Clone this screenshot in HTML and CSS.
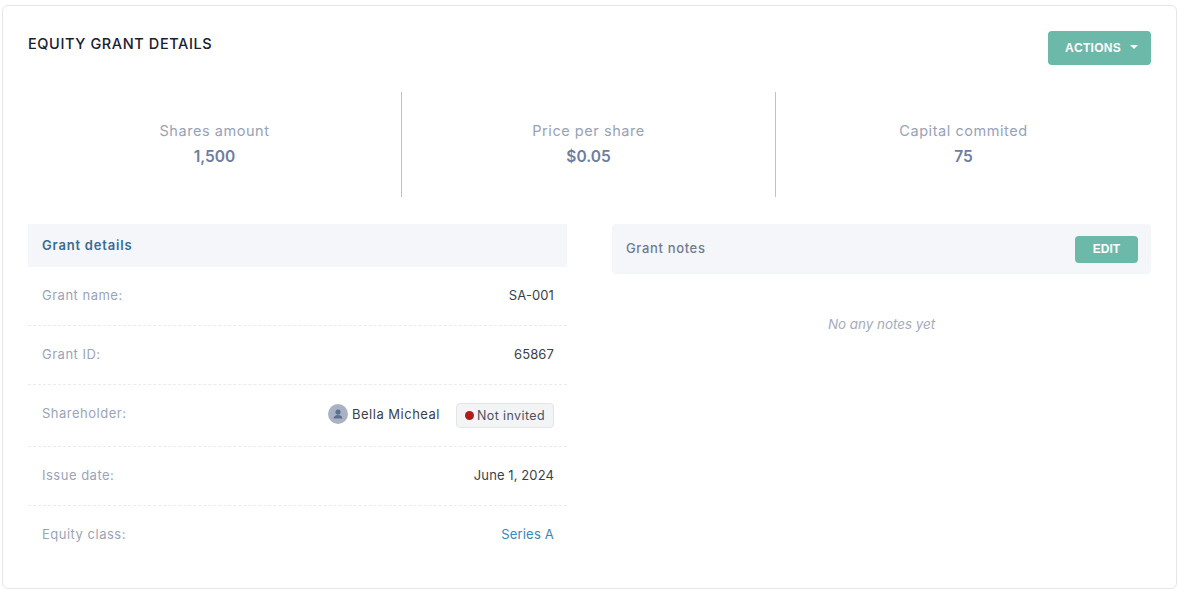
FILE: index.html
```html
<!DOCTYPE html>
<html lang="en">
<head>
<meta charset="utf-8">
<title>Equity grant details</title>
<link rel="stylesheet" href="styles.css">
</head>
<body>
<main class="card">
  <header class="card-head">
    <h1 class="title">EQUITY GRANT DETAILS</h1>
    <button class="btn btn-actions">ACTIONS<span class="caret"></span></button>
  </header>
  <section class="stats">
    <div class="stat"><div class="stat-label">Shares amount</div><div class="stat-value">1,500</div></div>
    <div class="stat"><div class="stat-label">Price per share</div><div class="stat-value">$0.05</div></div>
    <div class="stat"><div class="stat-label">Capital commited</div><div class="stat-value">75</div></div>
  </section>
  <section class="columns">
    <div class="details">
      <h2 class="details-head">Grant details</h2>
      <div class="row"><span class="key">Grant name:</span><span class="val">SA-001</span></div>
      <div class="row"><span class="key">Grant ID:</span><span class="val">65867</span></div>
      <div class="row row-holder"><span class="key key-holder">Shareholder:</span>
        <span class="holder">
          <svg class="avatar" viewBox="0 0 20 20" width="20" height="20" aria-hidden="true"><circle cx="10" cy="10" r="10" fill="#a9b2c3"/><circle cx="10" cy="8" r="2.6" fill="#5d6f8f"/><path d="M5.6 14.6c0-2.4 2-3.6 4.4-3.6s4.4 1.2 4.4 3.6z" fill="#5d6f8f"/></svg>
          <span class="val val-name">Bella Micheal</span>
          <span class="badge"><span class="dot"></span>Not invited</span>
        </span>
      </div>
      <div class="row"><span class="key">Issue date:</span><span class="val">June 1, 2024</span></div>
      <div class="row row-last"><span class="key">Equity class:</span><a class="val link" href="#">Series A</a></div>
    </div>
    <div class="notes">
      <div class="notes-head"><h2 class="notes-title">Grant notes</h2><button class="btn btn-edit">EDIT</button></div>
      <p class="empty">No any notes yet</p>
    </div>
  </section>
</main>
</body>
</html>
```
FILE: styles.css
```css
* { box-sizing: border-box; }
html, body { margin: 0; background: #fff; }
body { padding: 5px 3px 0 2px; font-family: Inter, "Liberation Sans", sans-serif; }
.card { height: 584px; border: 1px solid #e4e6ea; border-radius: 6px; padding: 25px 25px 0 25px; background: #fff; }
.card-head { display: flex; justify-content: space-between; align-items: flex-start; height: 61px; }
.title { margin: 0; padding-top: 3px; font-size: 14.5px; line-height: 20px; font-weight: 500; color: #1b2030; letter-spacing: 0.6px; }
.btn { border: 0; color: #fff; background: #6cb8a9; font-family: "Liberation Sans", Arial, sans-serif; font-weight: 700; font-size: 12px; }
.btn-actions { width: 103px; height: 34px; border-radius: 4px; display: flex; align-items: center; justify-content: flex-start; gap: 9px; padding-left: 17px; letter-spacing: 0.3px; }
.caret { width: 0; height: 0; border-left: 4px solid transparent; border-right: 4px solid transparent; border-top: 4px solid #fff; margin-top: -3px; }
.stats { display: grid; grid-template-columns: 374px 374px 1fr; height: 105px; }
.stat { display: flex; flex-direction: column; align-items: center; justify-content: center; gap: 6px; border-right: 1px solid #bcc2cd; padding-bottom: 1px; }
.stat:last-child { border-right: 0; }
.stat-label { font-size: 14.5px; line-height: 20px; color: #98a2b7; letter-spacing: 0.55px; }
.stat-value { font-size: 15.5px; line-height: 20px; font-weight: 600; color: #6c7da3; }
.columns { display: grid; grid-template-columns: 539px 539px; column-gap: 45px; margin-top: 27px; }
.details-head { margin: 0; height: 43px; padding: 0 14px 2px; display: flex; align-items: center; background: #f4f6fa; font-size: 13px; font-weight: 600; color: #3a6b94; letter-spacing: 0.8px; }
.row { height: 59px; padding: 0 13px 2px 14px; display: flex; justify-content: space-between; align-items: center; border-bottom: 1px dashed #e9ebef; }
.row-holder { height: 62px; padding-bottom: 4px; }
.row-last { border-bottom: 0; padding-bottom: 4px; }
.key { font-size: 13px; color: #9aa4b8; letter-spacing: 0.5px; }
.key-holder { margin-bottom: 2px; }
.val { font-size: 13px; color: #3a3f4a; letter-spacing: 0.1px; }
.val-name { letter-spacing: 0.5px; }
.link { color: #3a87b8; text-decoration: none; letter-spacing: 0.2px; }
.holder { display: flex; align-items: center; }
.avatar { margin-right: 4px; }
.badge { margin: 3px 0 0 16px; height: 25px; width: 98px; display: flex; align-items: center; justify-content: center; gap: 3px; background: #f3f4f6; border: 1px solid #e3e5e9; border-radius: 4px; font-size: 12.5px; color: #4c5260; letter-spacing: 0.4px; }
.dot { width: 9px; height: 9px; border-radius: 50%; background: #b01c1c; }
.notes-head { height: 50px; padding: 0 13px 0 14px; display: flex; justify-content: space-between; align-items: center; background: #f4f6fa; border-radius: 4px; }
.notes-title { margin: 0 0 2px; font-size: 13px; font-weight: 500; color: #717b90; letter-spacing: 0.65px; }
.btn-edit { width: 63px; height: 27px; border-radius: 4px; }
.empty { margin: 40px 0 0; text-align: center; font-size: 13.4px; line-height: 20px; font-style: italic; color: #a4abba; }
```
